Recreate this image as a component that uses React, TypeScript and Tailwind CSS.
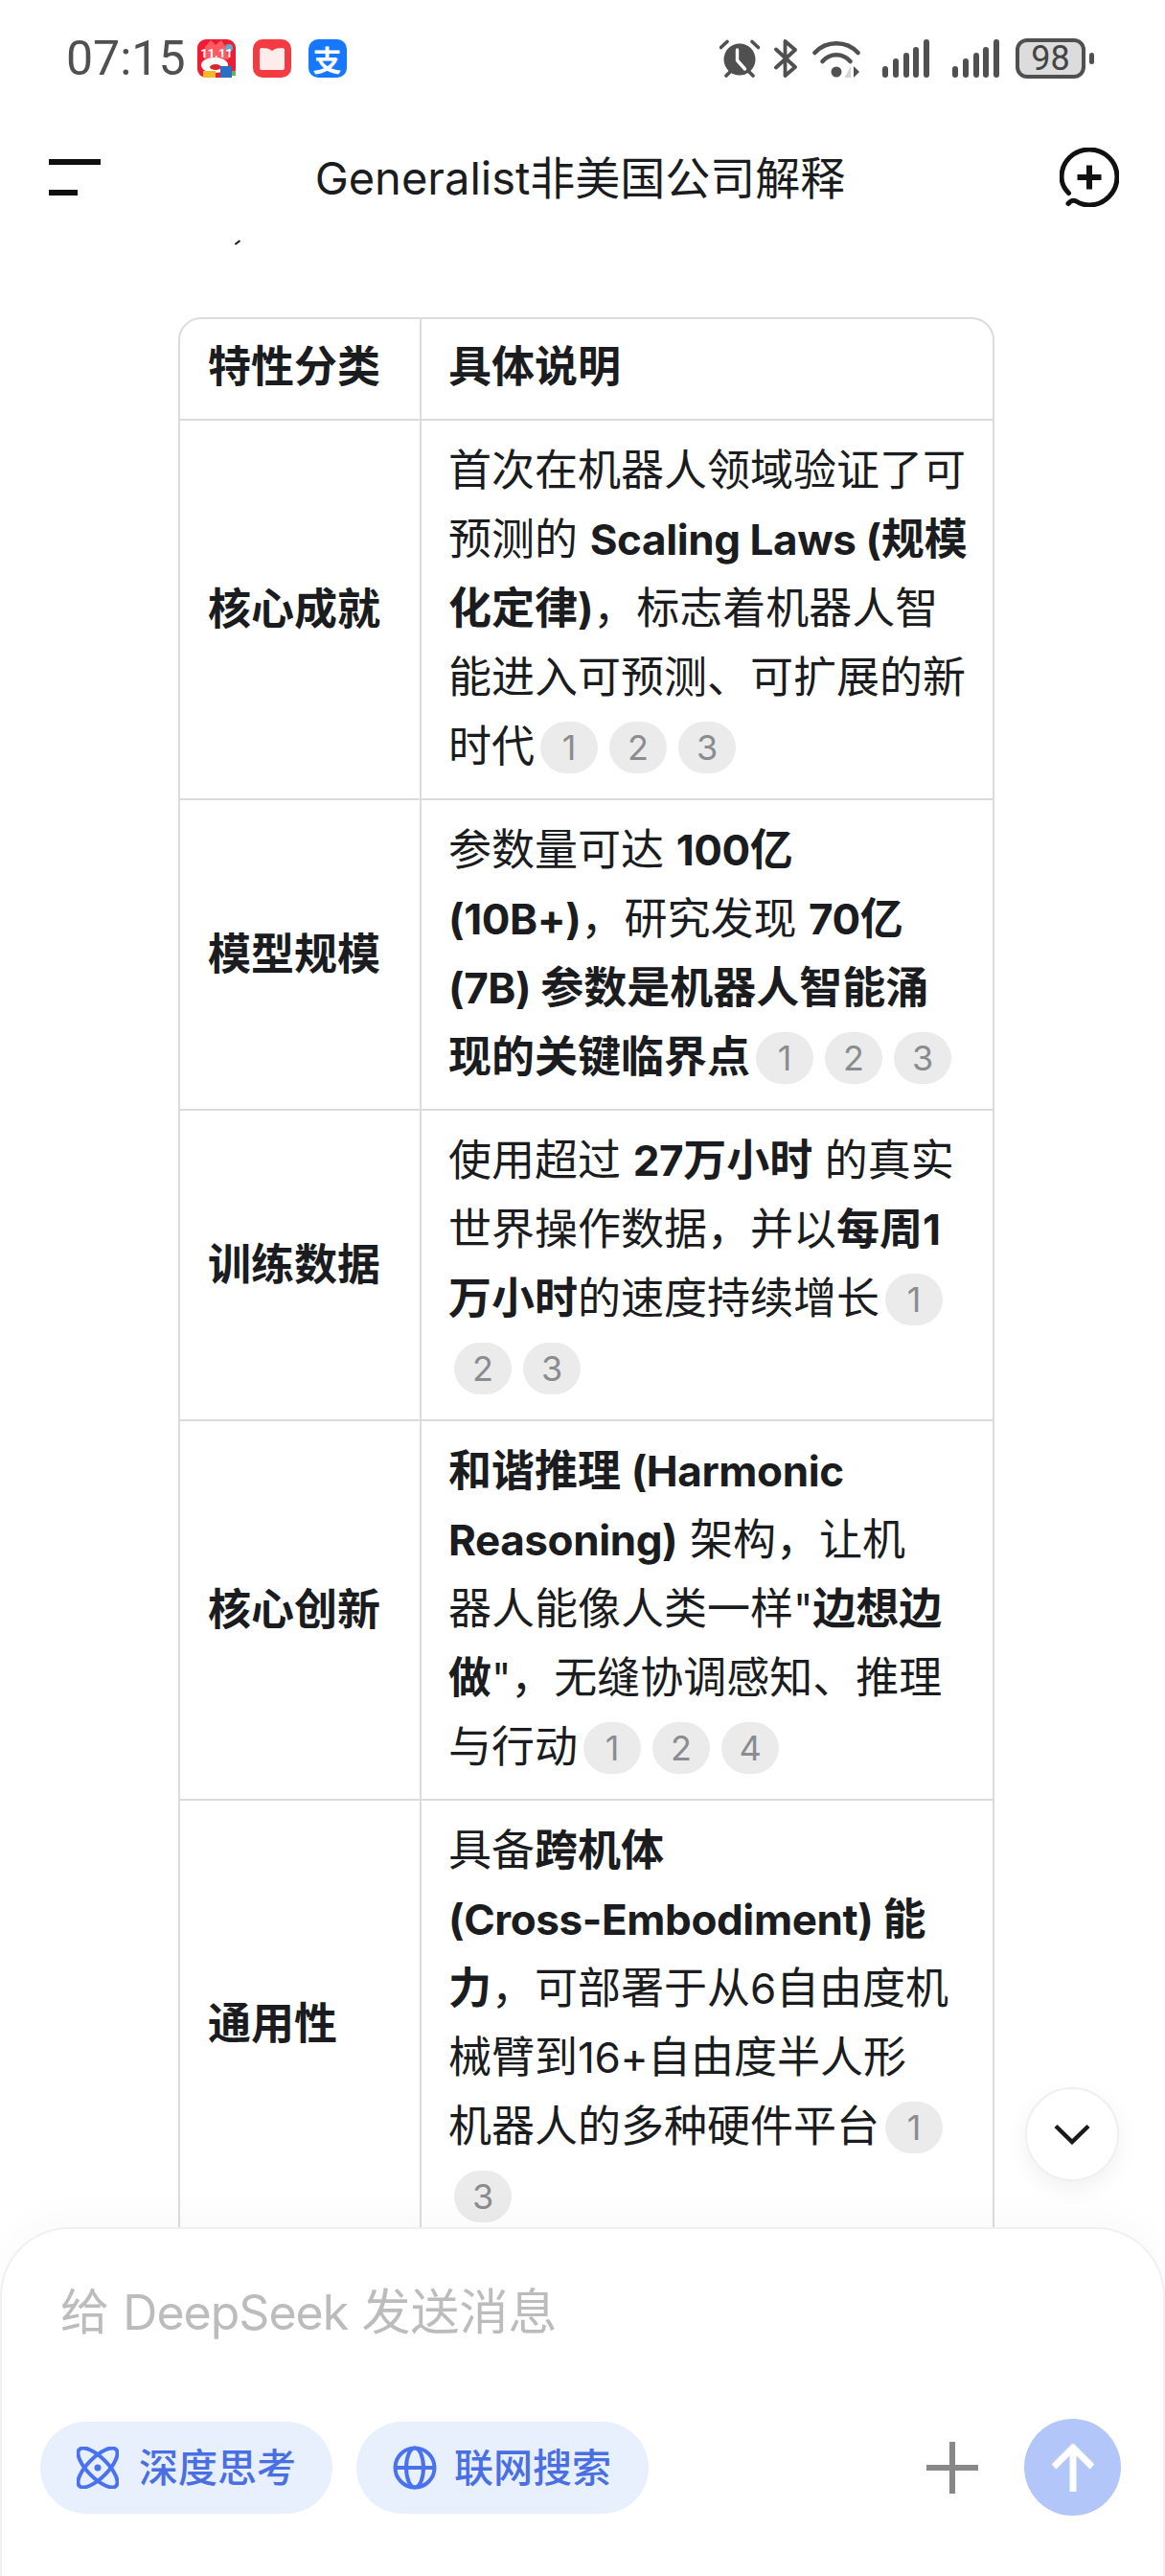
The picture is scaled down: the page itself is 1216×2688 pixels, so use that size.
import type { ReactNode } from "react";

const sans = "font-['Inter','Noto_Sans_CJK_SC',sans-serif]";

function Cite({ n }: { n: number }) {
  return (
    <span className="inline-flex h-[54px] w-[60px] mx-[6px] items-center justify-center rounded-full bg-[#ebebeb] align-middle text-[36px] leading-none font-normal tracking-normal text-[#8b8c90] relative top-[-3px]">
      {n}
    </span>
  );
}

function B({ children }: { children: ReactNode }) {
  return <strong className="font-bold">{children}</strong>;
}

// latin runs are a little narrower than plain Inter in the reference
function L({ children }: { children: ReactNode }) {
  return <span className="text-[44px] tracking-[-0.4px]">{children}</span>;
}

const rows: { label: string; lines: ReactNode[] }[] = [
  {
    label: "核心成就",
    lines: [
      "首次在机器人领域验证了可",
      <>预测的 <B><L>Scaling Laws (</L>规模</B></>,
      <><B>化定律<L>)</L></B>，标志着机器人智</>,
      "能进入可预测、可扩展的新",
      <>时代<Cite n={1} /><Cite n={2} /><Cite n={3} /></>,
    ],
  },
  {
    label: "模型规模",
    lines: [
      <>参数量可达 <B><L>100</L>亿</B></>,
      <><B><L>(10B+)</L></B>，研究发现 <B><L>70</L>亿</B></>,
      <><B><L>(7B) </L>参数是机器人智能涌</B></>,
      <><B>现的关键临界点</B><Cite n={1} /><Cite n={2} /><Cite n={3} /></>,
    ],
  },
  {
    label: "训练数据",
    lines: [
      <>使用超过 <B><L>27</L>万小时</B> 的真实</>,
      <>世界操作数据，并以<B>每周<L>1</L></B></>,
      <><B>万小时</B>的速度持续增长<Cite n={1} /></>,
      <><Cite n={2} /><Cite n={3} /></>,
    ],
  },
  {
    label: "核心创新",
    lines: [
      <><B>和谐推理 <L>(Harmonic</L></B></>,
      <><B><L>Reasoning)</L></B> 架构，让机</>,
      <>器人能像人类一样<L>"</L><B>边想边</B></>,
      <><B>做</B><L>"</L>，无缝协调感知、推理</>,
      <>与行动<Cite n={1} /><Cite n={2} /><Cite n={4} /></>,
    ],
  },
  {
    label: "通用性",
    lines: [
      <>具备<B>跨机体</B></>,
      <><B><L>(Cross-Embodiment) </L>能</B></>,
      <><B>力</B>，可部署于从<L>6</L>自由度机</>,
      <>械臂到<L>16+</L>自由度半人形</>,
      <>机器人的多种硬件平台<Cite n={1} /></>,
      <><Cite n={3} /></>,
    ],
  },
];

function AlarmIcon() {
  return (
    <svg width="42" height="40" viewBox="0 0 42 40" fill="none">
      <circle cx="21" cy="21" r="16.5" fill="#505050" />
      <path d="M1.5 8.5 8 2.5M40.5 8.5 34 2.5M7 38l4-4M35 38l-4-4" stroke="#505050" strokeWidth="3.6" strokeLinecap="round" />
      <path d="M18.5 11v11l8 9" stroke="#fff" strokeWidth="3.4" strokeLinecap="round" strokeLinejoin="round" />
    </svg>
  );
}

function BluetoothIcon() {
  return (
    <svg width="25" height="40" viewBox="0 0 25 40" fill="none">
      <path d="M2 10.5 22 29 11.5 38V2L22 11 2 29.5" stroke="#505050" strokeWidth="3.8" strokeLinecap="round" strokeLinejoin="round" />
    </svg>
  );
}

function WifiIcon() {
  return (
    <svg width="50" height="40" viewBox="0 0 50 40" fill="none">
      <path d="M2.500 14C14.500 1 35.500 1 47.500 14" stroke="#505050" strokeWidth="4.600" strokeLinecap="round" />
      <path d="M10.500 23C18.500 14 31.500 14 39.500 23" stroke="#505050" strokeWidth="4.600" strokeLinecap="round" />
      <circle cx="25" cy="34" r="5.500" fill="#505050" />
      <path d="M40 28v12h-6.500z" fill="#d4d4d4" />
      <path d="M43 28v12l6-6z" fill="#505050" />
    </svg>
  );
}

function SignalIcon() {
  const bars = [12, 20, 26, 32, 40];
  return (
    <div className="flex h-[40px] items-end gap-[4.75px]">
      {bars.map((h) => (
        <span key={h} className="w-[6px] rounded-full bg-[#505050]" style={{ height: h }} />
      ))}
    </div>
  );
}

function StatusBar() {
  return (
    <div className="flex h-[122px] shrink-0 items-center justify-between pl-[69px] pr-[74px]">
      <div className="flex items-center">
        <span className="font-['Roboto',sans-serif] text-[50px] leading-none text-[#505050]">07:15</span>
        <svg className="ml-[12px]" width="40" height="40" viewBox="0 0 40 40">
          <rect width="40" height="40" rx="9" fill="#ee1d33" />
          <path d="M8 8 14 1l5 5 6-5 5 8 3 12H7z" fill="#ff5a62" />
          <circle cx="33" cy="9" r="4" fill="#69a8c9" />
          <text x="20" y="19" textAnchor="middle" fontSize="13" fontWeight="700" fill="#fff" fontFamily="Roboto">11.11</text>
          <ellipse cx="18" cy="27" rx="14" ry="8" fill="#fff" />
          <ellipse cx="19" cy="29" rx="6" ry="3" fill="#d8262c" />
          <rect x="6" y="33" width="13" height="7" fill="#f4b82a" />
          <rect x="24" y="28" width="12" height="12" fill="#2a6fc4" />
          <rect x="36" y="33" width="4" height="5" fill="#6ab04c" />
        </svg>
        <div className="ml-[18px] flex h-[40px] w-[40px] items-center justify-center rounded-[10px] bg-[#f53b42]">
          <svg width="28" height="26" viewBox="0 0 28 26">
            <path d="M3 2c4 0 8 .6 11 3 3-2.400 7-3 11-3 1 0 2 1 2 2v19c0 1-1 2-2 2H3c-1 0-2-1-2-2V4c0-1 1-2 2-2z" fill="#fdecec" />
          </svg>
        </div>
        <div className="ml-[18px] flex h-[40px] w-[40px] items-center justify-center rounded-[10px] bg-[#1677ff] font-['Noto_Sans_CJK_SC',sans-serif] text-[30px] leading-none font-bold text-white">
          支
        </div>
      </div>
      <div className="flex items-center">
        <AlarmIcon />
        <span className="ml-[15px]"><BluetoothIcon /></span>
        <span className="ml-[15px]"><WifiIcon /></span>
        <span className="ml-[23px]"><SignalIcon /></span>
        <span className="ml-[24px]"><SignalIcon /></span>
        <div className="ml-[17px] flex h-[42px] w-[73px] items-center justify-center rounded-[12px] border-[4px] border-[#505050] bg-[#dcdcdc] font-['Roboto',sans-serif] text-[36px] leading-none text-[#444]">
          98
        </div>
        <span className="ml-[4px] h-[12px] w-[5px] rounded-full bg-[#505050]" />
      </div>
    </div>
  );
}

function Header() {
  return (
    <div className="flex h-[126px] shrink-0 items-center justify-between pl-[51px] pr-[48px]">
      <div className="flex w-[54px] flex-col gap-[26px]">
        <span className="h-[6px] w-[54px] bg-[#0f0f0f]" />
        <span className="h-[6px] w-[30px] bg-[#0f0f0f]" />
      </div>
      <h1 className="text-[47px] font-normal leading-none text-[#1a1c20]">Generalist非美国公司解释</h1>
      <svg width="62" height="62" viewBox="0 0 62 62" fill="none">
        <path d="M9.500 47.500C4.500 42.500 2 37 2 30.500 2 14.500 15 2 31 2s29 12.500 29 28.500S47 60 31 60c-3.500 0-6.500-.5-10-2-4-2-7-5-12 .5" stroke="#111" strokeWidth="5" strokeLinecap="round" />
        <path d="M18.500 31h25M31 18.500v25" stroke="#111" strokeWidth="6" />
      </svg>
    </div>
  );
}

function Table() {
  return (
    <div className="ml-[186px] w-[852px] overflow-hidden rounded-t-[24px] border-2 border-[#dcdcdc]">
      <div className="flex border-b-2 border-[#dcdcdc] font-bold">
        <div className="w-[252px] shrink-0 border-r-2 border-[#dcdcdc] pl-[29px] pb-[18px] pt-[14px]">特性分类</div>
        <div className="pl-[28px] pb-[18px] pt-[14px]">具体说明</div>
      </div>
      {rows.map((row) => (
        <div key={row.label} className="flex border-b-2 border-[#dcdcdc]">
          <div className="flex w-[252px] shrink-0 items-center border-r-2 border-[#dcdcdc] pl-[29px] font-bold">
            {row.label}
          </div>
          <div className="pb-[18px] pl-[28px] pt-[16px] whitespace-nowrap">
            {row.lines.map((line, i) => (
              <div key={i} className="h-[72px]">{line}</div>
            ))}
          </div>
        </div>
      ))}
    </div>
  );
}

function Composer() {
  return (
    <div className="absolute inset-x-0 bottom-0 flex h-[364px] flex-col rounded-t-[72px] border-x-2 border-t-2 border-[#f0f0f0] bg-white shadow-[0_-12px_40px_rgba(0,0,0,0.025)]">
      <div className="pl-[61px] pt-[56px] text-[51px] leading-[62px] text-[#bcbcbc]">
        给 <span className="text-[50px] tracking-[-1px]">DeepSeek</span> 发送消息
      </div>
      <div className="mt-auto flex items-center pb-[63px] pl-[40px] pr-[44px]">
        <button className="flex h-[96px] w-[305px] items-center rounded-full bg-[#e8f0fd] pl-[38px] text-[41px] font-medium text-[#4a6fe3]">
          <svg width="44" height="44" viewBox="0 0 44 44" fill="none" stroke="#4a72f0" strokeWidth="4">
            <ellipse cx="22" cy="22" rx="27" ry="10.500" transform="rotate(45 22 22)" />
            <ellipse cx="22" cy="22" rx="27" ry="10.500" transform="rotate(-45 22 22)" />
            <circle cx="22" cy="22" r="3.500" fill="#4a72f0" stroke="none" />
          </svg>
          <span className="ml-[21px]">深度思考</span>
        </button>
        <button className="ml-[25px] flex h-[96px] w-[305px] items-center rounded-full bg-[#e8f0fd] pl-[38px] text-[41px] font-medium text-[#4a6fe3]">
          <svg width="46" height="46" viewBox="0 0 46 46" fill="none" stroke="#4a72f0" strokeWidth="4">
            <circle cx="23" cy="23" r="20.500" />
            <ellipse cx="23" cy="23" rx="9" ry="20.500" />
            <path d="M2.500 23h41" />
          </svg>
          <span className="ml-[18px]">联网搜索</span>
        </button>
        <svg className="ml-auto" width="54" height="54" viewBox="0 0 54 54" fill="none" stroke="#888" strokeWidth="6">
          <path d="M0 27h54M27 0v54" />
        </svg>
        <div className="ml-[48px] flex h-[101px] w-[101px] items-center justify-center rounded-full bg-[#b3c6fa]">
          <svg width="46" height="50" viewBox="0 0 46 50" fill="none" stroke="#fff" strokeWidth="7">
            <path d="M23 50V5M3 24 23 4l20 20" />
          </svg>
        </div>
      </div>
    </div>
  );
}

export default function App() {
  return (
    <div className={`relative flex h-[2688px] w-[1216px] flex-col overflow-hidden bg-white text-[45px] leading-[72px] text-[#1a1c20] ${sans}`}>
      <StatusBar />
      <Header />
      <main className="flex-1 overflow-hidden">
        <svg className="ml-[245px] mt-[2px]" width="6" height="6" viewBox="0 0 6 6">
          <path d="M0.500 5 5.500 1" stroke="#222" strokeWidth="2" />
        </svg>
        <div className="h-[75px]" />
        <Table />
      </main>
      <Composer />
      <button className="absolute left-[1070px] top-[2178px] flex h-[98px] w-[98px] items-center justify-center rounded-full border-2 border-[#f0f0f0] bg-white shadow-[0_8px_24px_rgba(0,0,0,0.06)]">
        <svg width="38" height="22" viewBox="0 0 38 22" fill="none" stroke="#1a1a1a" strokeWidth="4.500">
          <path d="M2 2.500 19 19 36 2.500" />
        </svg>
      </button>
    </div>
  );
}
